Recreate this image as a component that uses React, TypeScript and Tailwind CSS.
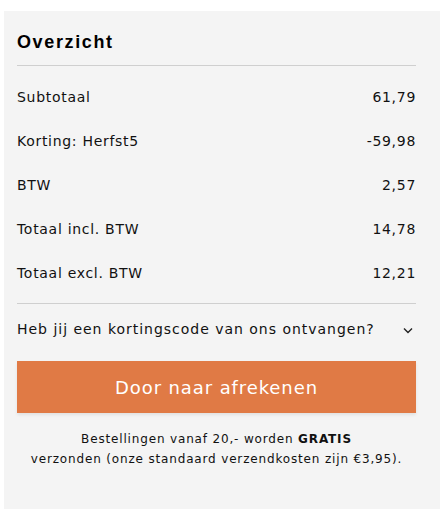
import React from 'react';

const rows = [
  { label: 'Subtotaal', value: '61,79' },
  { label: 'Korting: Herfst5', value: '-59,98' },
  { label: 'BTW', value: '2,57' },
  { label: 'Totaal incl. BTW', value: '14,78' },
  { label: 'Totaal excl. BTW', value: '12,21' },
];

export default function App() {
  return (
    <div className="min-h-screen bg-white pt-[11px] pl-1 pr-[3px] font-['DejaVu_Sans',Arial,sans-serif] text-[#111]">
      <div className="bg-[#f4f4f4] px-[13px] pb-[40px] pr-[24px]">
        {/* Header */}
        <div className="h-[55px] border-b border-[#cfcfcf] pt-[20px]">
          <h2 className="font-['Liberation_Sans',Arial,sans-serif] text-[18px] font-bold leading-[22px] tracking-[0.09em] text-black">Overzicht</h2>
        </div>

        {/* Totals */}
        <div className="border-b border-[#cfcfcf] pt-[9px] pb-[8px]">
          {rows.map((row) => (
            <div key={row.label} className="flex h-[44px] items-center justify-between text-[14px] tracking-[0.05em]">
              <span>{row.label}</span>
              <span>{row.value}</span>
            </div>
          ))}
        </div>

        {/* Discount code */}
        <button className="flex h-[52px] w-full items-center justify-between pb-[1px] text-[14px] tracking-[0.07em]">
          <span>Heb jij een kortingscode van ons ontvangen?</span>
          <svg width="10" height="7" viewBox="0 0 10 7" className="mr-[3px] mt-[2px]" fill="none" stroke="#222" strokeWidth="1.4">
            <path d="M1 1.5 L5 5.5 L9 1.5" />
          </svg>
        </button>

        {/* Checkout */}
        <button className="mt-[5px] flex h-[52px] w-full items-center justify-center bg-[#e07a45] text-[18px] tracking-[0.05em] text-white shadow-[0_2px_3px_rgba(0,0,0,0.08)]">
          Door naar afrekenen
        </button>

        <p className="mt-[16px] text-center text-[12px] leading-[20px] tracking-[0.07em]">
          Bestellingen vanaf 20,- worden <span className="font-bold">GRATIS</span>
          <br />
          verzonden (onze standaard verzendkosten zijn €3,95).
        </p>
      </div>
    </div>
  );
}
